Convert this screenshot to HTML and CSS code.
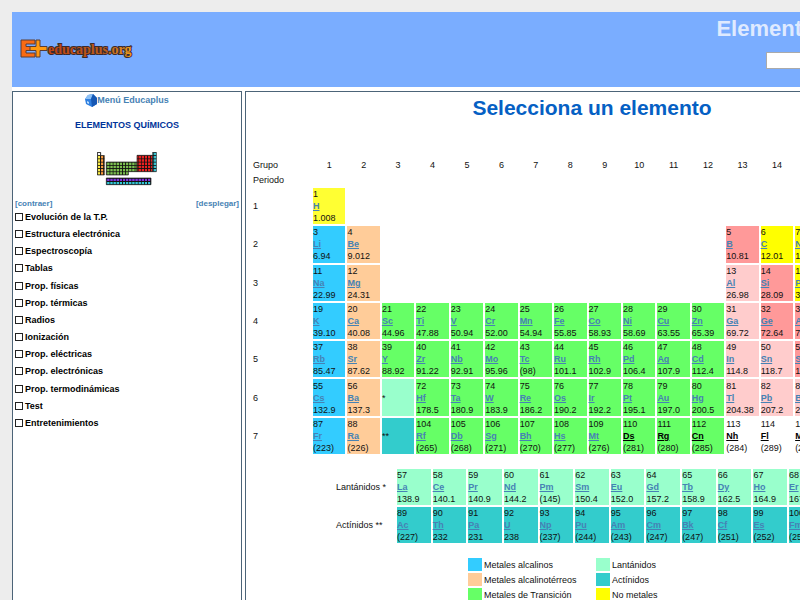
FILE: index.html
```html
<!DOCTYPE html>
<html lang="es">
<head>
<meta charset="utf-8">
<title>Elementos Químicos</title>
<link rel="stylesheet" href="styles.css">
</head>
<body>
<div class="page">
  <header class="banner">
    <a class="logo" href="#" aria-label="educaplus.org">
      <svg width="114" height="24" viewBox="0 0 114 24">
        <defs>
          <linearGradient id="word" x1="0" x2="1" y1="0" y2="0">
            <stop offset="0" stop-color="#c04410"/>
            <stop offset="0.7" stop-color="#b85e1c"/>
            <stop offset="1" stop-color="#f0a01c"/>
          </linearGradient>
        </defs>
        <path d="M1 3H15V7H6V9.5H14V13.500H6V16H15V20H1Z" fill="#f86a14" stroke="#5a3c34" stroke-width="1"/>
        <path d="M16 3H20V9.500H27V13.500H20V20H16V13.500H10V9.500H16Z" fill="#ff9a10" stroke="#5a3c34" stroke-width="1"/>
        <text x="28" y="17" class="logo-text">educaplus.org</text>
      </svg>
    </a>
    <div class="banner-right">
      <div class="site-title">Elementos Químicos</div>
      <form class="search"><input type="text" aria-label="Buscar"></form>
    </div>
  </header>
  <div class="columns">
    <nav class="sidebar">
      <a class="menu-link" href="#"><svg width="12" height="13" viewBox="0 0 12 13">
        <path d="M3 1L8 0L12 4V10L7 13L1 10L0 5Z" fill="#2f7fe0"/>
        <path d="M3 1L8 0L6 5L0 5Z" fill="#8cc0f5"/>
        <path d="M6 5L8 0L12 4V10L7 13Z" fill="#1658b4"/>
        <path d="M2 7L4 8V10L2 9Z" fill="#bfe0ff"/>
      </svg>Menú Educaplus</a>
      <h2 class="side-title">ELEMENTOS QUÍMICOS</h2>
      <svg class="mini" width="60" height="34" viewBox="0 0 180 102">
        <defs>
          <pattern id="cell" width="9.4" height="9.7" patternUnits="userSpaceOnUse">
            <path d="M0 1H9.4M1 0V9.7" stroke="#111" stroke-width="3" fill="none"/>
          </pattern>
          <g id="shape">
            <path d="M1 1h10v9.7h11V69H1Z"/>
            <path d="M28 30H120V59H94V69H28Z"/>
            <path d="M120 10H167V59H120Z"/>
            <path d="M167 1H178V59H167Z"/>
            <path d="M28 78H162V98H28Z"/>
          </g>
        </defs>
        <path d="M1 1h10v10h-10z" fill="#fff"/>
        <path d="M1 11h10v58h-10z" fill="#fff04a"/>
        <path d="M11 11h11v58h-11z" fill="#ff9c3c"/>
        <path d="M28 30H120V59H94V69H28Z" fill="#7cc050"/>
        <path d="M120 10H167V59H120Z" fill="#f02020"/>
        <path d="M167 1H178V59H167Z" fill="#40dcea"/>
        <path d="M28 78H162V88H28Z" fill="#8030e0"/>
        <path d="M28 88H162V98H28Z" fill="#30c8d8"/>
        <use href="#shape" fill="url(#cell)" stroke="#222" stroke-width="2"/>
      </svg>
      <div class="toggles"><a href="#">[contraer]</a><a href="#">[desplegar]</a></div>
      <ul class="menu">
        <li><label><input type="checkbox">Evolución de la T.P.</label></li>
        <li><label><input type="checkbox">Estructura electrónica</label></li>
        <li><label><input type="checkbox">Espectroscopía</label></li>
        <li><label><input type="checkbox">Tablas</label></li>
        <li><label><input type="checkbox">Prop. físicas</label></li>
        <li><label><input type="checkbox">Prop. térmicas</label></li>
        <li><label><input type="checkbox">Radios</label></li>
        <li><label><input type="checkbox">Ionización</label></li>
        <li><label><input type="checkbox">Prop. eléctricas</label></li>
        <li><label><input type="checkbox">Prop. electrónicas</label></li>
        <li><label><input type="checkbox">Prop. termodinámicas</label></li>
        <li><label><input type="checkbox">Test</label></li>
        <li><label><input type="checkbox">Entretenimientos</label></li>
      </ul>
    </nav>
    <main class="content">
      <h1>Selecciona un elemento</h1>
      <table class="periodic" id="periodic"></table>
      <table class="series" id="series"></table>
      <ul class="legend">
        <li><span class="swatch alkali"></span>Metales alcalinos</li>
        <li><span class="swatch lanthanide"></span>Lantánidos</li>
        <li><span class="swatch earth"></span>Metales alcalinotérreos</li>
        <li><span class="swatch actinide"></span>Actínidos</li>
        <li><span class="swatch transition"></span>Metales de Transición</li>
        <li><span class="swatch nonmetal"></span>No metales</li>
      </ul>
    </main>
  </div>
</div>
<script src="script.js"></script>
</body>
</html>
```
FILE: styles.css
```css
* { box-sizing: border-box; }
body {
  margin: 0;
  padding: 12px 0 0 12px;
  background: #ededed;
  font: 9px/12px "Liberation Sans", Arial, sans-serif;
  color: #111;
}
a { color: #4682b4; }
ul { list-style: none; margin: 0; padding: 0; }
.page {
  min-width: 926px;
  min-height: calc(100vh - 12px);
  display: flex;
  flex-direction: column;
  background: #fff;
}
.banner {
  display: flex;
  justify-content: space-between;
  min-height: 75px;
  padding: 0 4px 0 8px;
  background: #7aadff;
}
.logo { margin-top: 25px; }
.logo svg { display: block; overflow: visible; }
.logo-text {
  font: bold 14px "Liberation Serif", serif;
  fill: url(#word);
  stroke: #3a2a2e;
  stroke-width: 2px;
  paint-order: stroke;
}
.banner-right { display: flex; flex-direction: column; align-items: flex-end; gap: 11px; }
.site-title { padding-top: 5px; font: bold 22px/24px "Liberation Sans", Arial, sans-serif; color: #dfeaff; }
.search input {
  display: block;
  width: 168px;
  height: 17px;
  border: 1px solid #aaa;
  background: #fff;
  font: inherit;
}
.columns { flex: 1; display: grid; grid-template-columns: 230px 1fr; gap: 3px; padding-top: 4px; }
.sidebar, .content { border: 1px solid #4c6478; border-bottom: 0; background: #fff; }
.sidebar { padding: 1px 2px; display: flex; flex-direction: column; }
.menu-link {
  display: flex;
  align-items: center;
  justify-content: center;
  height: 14px;
  font-size: 9px;
  font-weight: bold;
  text-decoration: none;
}
.side-title { margin: 12px 0 0; font-size: 9px; line-height: 12px; text-align: center; color: #039; }
.mini { display: block; margin: 21px auto 0; }
.toggles { display: flex; justify-content: space-between; margin-top: 12px; font-size: 8px; font-weight: bold; }
.toggles a { text-decoration: none; }
.menu { display: grid; grid-auto-rows: 1fr; min-height: 223px; font-weight: bold; color: #000; }
.menu label { display: flex; align-items: center; gap: 2px; line-height: 14px; }
.menu input {
  appearance: none;
  width: 8px;
  height: 8px;
  margin: 0;
  border: 1px solid #222;
}
.content { padding: 0 4px 0 5px; }
h1 { margin: 3px 0 0; font-size: 21px; line-height: 26px; text-align: center; color: #0560c4; }
table { border-spacing: 2px; table-layout: fixed; }
th, td { padding: 0; text-align: left; font-weight: normal; }
td a { display: block; width: fit-content; font-weight: bold; }
.periodic { width: 100%; height: 300px; margin-top: 35px; }
.periodic .row-label { width: 58px; }
.periodic .head { height: 13px; }
.periodic .head th + th { text-align: center; }
.series { width: 562px; height: 78px; margin: 11px 0 0 83px; }
.series .row-label { width: 59px; }
.alkali { background: #3cf; }
.earth { background: #fc9; }
.transition { background: #6f6; }
.lanthanide { background: #9fc; }
.actinide { background: #3cc; }
.nonmetal { background: #ff0; }
.hydrogen { background: #ff3; }
.semimetal { background: #f99; }
.metal { background: #fcc; }
.noble { background: #ccf; }
.unknown { background: #fff; }
.plain { color: #000; }
.legend {
  display: grid;
  grid-template-columns: 126px 120px;
  column-gap: 2px;
  row-gap: 2px;
  justify-content: center;
  margin-top: 13px;
}
.legend li { display: flex; align-items: center; gap: 2px; height: 13px; }
.swatch { width: 14px; height: 13px; }
```
FILE: script.js
```js
const A = "alkali", E = "earth", T = "transition", L = "lanthanide", C = "actinide",
  N = "nonmetal", S = "semimetal", M = "metal", G = "noble", U = "unknown";

// [first column, category, atomic number, symbol, atomic mass]
const periods = [
  [[1, "hydrogen", 1, "H", "1.008"], [18, G, 2, "He", "4.003"]],
  [[1, A, 3, "Li", "6.94"], [2, E, 4, "Be", "9.012"], [13, S, 5, "B", "10.81"], [14, N, 6, "C", "12.01"],
   [15, N, 7, "N", "14.01"], [16, N, 8, "O", "16.00"], [17, N, 9, "F", "19.00"], [18, G, 10, "Ne", "20.18"]],
  [[1, A, 11, "Na", "22.99"], [2, E, 12, "Mg", "24.31"], [13, M, 13, "Al", "26.98"], [14, S, 14, "Si", "28.09"],
   [15, N, 15, "P", "30.97"], [16, N, 16, "S", "32.07"], [17, N, 17, "Cl", "35.45"], [18, G, 18, "Ar", "39.95"]],
  [[1, A, 19, "K", "39.10"], [2, E, 20, "Ca", "40.08"], [3, T, 21, "Sc", "44.96"], [4, T, 22, "Ti", "47.88"],
   [5, T, 23, "V", "50.94"], [6, T, 24, "Cr", "52.00"], [7, T, 25, "Mn", "54.94"], [8, T, 26, "Fe", "55.85"],
   [9, T, 27, "Co", "58.93"], [10, T, 28, "Ni", "58.69"], [11, T, 29, "Cu", "63.55"], [12, T, 30, "Zn", "65.39"],
   [13, M, 31, "Ga", "69.72"], [14, S, 32, "Ge", "72.64"], [15, S, 33, "As", "74.92"], [16, N, 34, "Se", "78.96"],
   [17, N, 35, "Br", "79.90"], [18, G, 36, "Kr", "83.79"]],
  [[1, A, 37, "Rb", "85.47"], [2, E, 38, "Sr", "87.62"], [3, T, 39, "Y", "88.92"], [4, T, 40, "Zr", "91.22"],
   [5, T, 41, "Nb", "92.91"], [6, T, 42, "Mo", "95.96"], [7, T, 43, "Tc", "(98)"], [8, T, 44, "Ru", "101.1"],
   [9, T, 45, "Rh", "102.9"], [10, T, 46, "Pd", "106.4"], [11, T, 47, "Ag", "107.9"], [12, T, 48, "Cd", "112.4"],
   [13, M, 49, "In", "114.8"], [14, M, 50, "Sn", "118.7"], [15, S, 51, "Sb", "121.8"], [16, S, 52, "Te", "127.6"],
   [17, N, 53, "I", "126.9"], [18, G, 54, "Xe", "131.3"]],
  [[1, A, 55, "Cs", "132.9"], [2, E, 56, "Ba", "137.3"], [3, L, "*"], [4, T, 72, "Hf", "178.5"],
   [5, T, 73, "Ta", "180.9"], [6, T, 74, "W", "183.9"], [7, T, 75, "Re", "186.2"], [8, T, 76, "Os", "190.2"],
   [9, T, 77, "Ir", "192.2"], [10, T, 78, "Pt", "195.1"], [11, T, 79, "Au", "197.0"], [12, T, 80, "Hg", "200.5"],
   [13, M, 81, "Tl", "204.38"], [14, M, 82, "Pb", "207.2"], [15, M, 83, "Bi", "209.0"], [16, S, 84, "Po", "(209)"],
   [17, N, 85, "At", "(210)"], [18, G, 86, "Rn", "(222)"]],
  [[1, A, 87, "Fr", "(223)"], [2, E, 88, "Ra", "(226)"], [3, C, "**"], [4, T, 104, "Rf", "(265)"],
   [5, T, 105, "Db", "(268)"], [6, T, 106, "Sg", "(271)"], [7, T, 107, "Bh", "(270)"], [8, T, 108, "Hs", "(277)"],
   [9, T, 109, "Mt", "(276)"], [10, T, 110, "Ds", "(281)"], [11, T, 111, "Rg", "(280)"], [12, T, 112, "Cn", "(285)"],
   [13, U, 113, "Nh", "(284)"], [14, U, 114, "Fl", "(289)"], [15, U, 115, "Mc", "(288)"], [16, U, 116, "Lv", "(293)"],
   [17, U, 117, "Ts", "(294)"], [18, U, 118, "Og", "(294)"]]
];

const series = [
  ["Lantánidos *", L, 57, "La 138.9 Ce 140.1 Pr 140.9 Nd 144.2 Pm (145) Sm 150.4 Eu 152.0 Gd 157.2 Tb 158.9 Dy 162.5 Ho 164.9 Er 167.3 Tm 168.9 Yb 173.0"],
  ["Actínidos **", C, 89, "Ac (227) Th 232 Pa 231 U 238 Np (237) Pu (244) Am (243) Cm (247) Bk (247) Cf (251) Es (252) Fm (257) Md (258) No (259)"]
];

function cell(category, number, symbol, mass) {
  if (!symbol) return `<td class="${category}">${number}</td>`;
  const link = number >= 110 ? ' class="plain"' : "";
  return `<td class="${category}">${number}<a${link} href="#">${symbol}</a>${mass}</td>`;
}

let html = '<tr class="head"><th class="row-label">Grupo</th>';
for (let g = 1; g <= 18; g++) html += `<th>${g}</th>`;
html += '</tr><tr class="head"><th>Periodo</th></tr>';
periods.forEach((items, i) => {
  html += `<tr><th>${i + 1}</th>`;
  let column = 1;
  for (const [at, ...data] of items) {
    if (at > column) html += `<td colspan="${at - column}"></td>`;
    html += cell(...data);
    column = at + 1;
  }
  html += "</tr>";
});
document.getElementById("periodic").innerHTML = html;

document.getElementById("series").innerHTML = series.map(([name, category, first, list]) => {
  const parts = list.split(" ");
  let row = `<tr><th class="row-label">${name}</th>`;
  for (let i = 0; i < parts.length; i += 2) row += cell(category, first + i / 2, parts[i], parts[i + 1]);
  return row + "</tr>";
}).join("");
```
